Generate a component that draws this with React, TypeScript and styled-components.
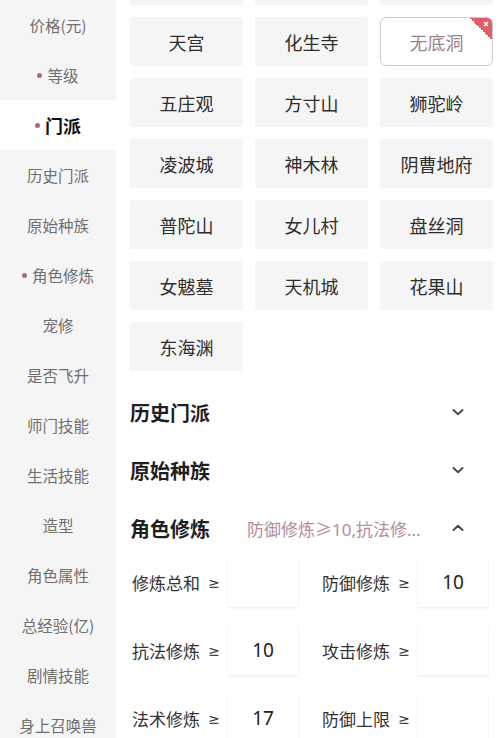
import React, { useLayoutEffect, useRef } from "react";
import styled, { createGlobalStyle } from "styled-components";

const Global = createGlobalStyle`
  html, body { margin: 0; padding: 0; background: #fff; }
  body {
    font-family: "Noto Sans CJK SC", "Noto Sans", sans-serif;
    overflow: hidden;
  }
  * { box-sizing: border-box; }
`;

const Page = styled.div`
  display: flex;
  width: 500px;
  height: 738px;
  overflow: hidden;
`;

const Sidebar = styled.nav`
  width: 116px;
  flex-shrink: 0;
  background: #f5f5f5;
  display: flex;
  flex-direction: column;
`;

const NavItem = styled.div<{ $active?: boolean }>`
  height: 50px;
  flex-shrink: 0;
  display: flex;
  align-items: center;
  justify-content: center;
  gap: 5px;
  font-size: ${(p) => (p.$active ? "18px" : "15.5px")};
  font-weight: ${(p) => (p.$active ? 700 : 400)};
  color: ${(p) => (p.$active ? "#111" : "#6f6f6f")};
  background: ${(p) => (p.$active ? "#fff" : "transparent")};
`;

const Dot = styled.span`
  width: 5px;
  height: 5px;
  border-radius: 50%;
  background: #b0687c;
`;

const Content = styled.main`
  flex: 1;
  height: 738px;
  overflow: hidden;
  padding: 0 6px 0 14px;
`;

const SchoolGrid = styled.div`
  display: grid;
  grid-template-columns: repeat(3, 113px);
  grid-auto-rows: 49px;
  column-gap: 12px;
  row-gap: 12px;
  margin-bottom: 12px;
`;

const Tile = styled.div<{ $selected?: boolean }>`
  position: relative;
  overflow: hidden;
  display: flex;
  align-items: center;
  justify-content: center;
  font-size: 18px;
  color: ${(p) => (p.$selected ? "#9c8390" : "#2e2e2e")};
  background: ${(p) => (p.$selected ? "#fff" : "#f5f5f5")};
  border: 1px solid ${(p) => (p.$selected ? "#d0cdce" : "transparent")};
  border-radius: ${(p) => (p.$selected ? "6px" : "3px")};
`;

const CornerMark = styled.span`
  position: absolute;
  top: 0;
  right: 0;
  width: 22px;
  height: 22px;
  background: linear-gradient(45deg, transparent 50%, #de5f6a 50%);
  svg {
    position: absolute;
    top: 3px;
    right: 3px;
  }
`;

const SectionHeader = styled.div`
  height: 58px;
  display: flex;
  align-items: center;
  padding-right: 29px;
`;

const SectionTitle = styled.h3`
  margin: 0;
  font-size: 20px;
  font-weight: 700;
  color: #1f1f1f;
  flex-shrink: 0;
`;

const Summary = styled.span`
  flex: 1;
  margin-left: 37px;
  font-family: "Noto Sans", "Noto Sans CJK SC", sans-serif;
  font-size: 17px;
  color: #b38d9d;
  white-space: nowrap;
`;

const Chevron = styled.svg`
  margin-left: auto;
  flex-shrink: 0;
`;

const FormGrid = styled.div`
  display: grid;
  grid-template-columns: 190px 180px;
  grid-auto-rows: 50px;
  row-gap: 18px;
  padding-left: 2px;
`;

const Field = styled.div`
  display: flex;
  align-items: center;
`;

const FieldLabel = styled.span`
  font-size: 17px;
  color: #333;
  width: 68px;
`;

const Gte = styled.span`
  font-family: "Noto Sans", "DejaVu Sans", sans-serif;
  font-size: 14px;
  color: #444;
  width: 28px;
  text-align: center;
`;

const ValueBox = styled.div`
  width: 70px;
  height: 50px;
  display: flex;
  align-items: center;
  justify-content: center;
  background: #fff;
  font-family: "Noto Sans", "Noto Sans CJK SC", sans-serif;
  font-size: 19px;
  color: #222;
  box-shadow: 0 1px 2px rgba(0, 0, 0, 0.07), 0 0 3px rgba(0, 0, 0, 0.04);
`;

const navItems: { label: string; dot?: boolean; active?: boolean }[] = [
  { label: "价格(元)" },
  { label: "等级", dot: true },
  { label: "门派", dot: true, active: true },
  { label: "历史门派" },
  { label: "原始种族" },
  { label: "角色修炼", dot: true },
  { label: "宠修" },
  { label: "是否飞升" },
  { label: "师门技能" },
  { label: "生活技能" },
  { label: "造型" },
  { label: "角色属性" },
  { label: "总经验(亿)" },
  { label: "剧情技能" },
  { label: "身上召唤兽" },
];

const schools = [
  "大唐官府", "龙宫", "魔王寨",
  "天宫", "化生寺", "无底洞",
  "五庄观", "方寸山", "狮驼岭",
  "凌波城", "神木林", "阴曹地府",
  "普陀山", "女儿村", "盘丝洞",
  "女魃墓", "天机城", "花果山",
  "东海渊",
];

const selectedSchool = "无底洞";

const cultivation: { label: string; value?: string }[] = [
  { label: "修炼总和" },
  { label: "防御修炼", value: "10" },
  { label: "抗法修炼", value: "10" },
  { label: "攻击修炼" },
  { label: "法术修炼", value: "17" },
  { label: "防御上限" },
];

function ChevronIcon({ up }: { up?: boolean }) {
  return (
    <Chevron width="14" height="10" viewBox="0 0 14 10">
      <path
        d={up ? "M2.5 7 L7 2.8 L11.5 7" : "M2.5 3 L7 7.2 L11.5 3"}
        fill="none"
        stroke="#4a4a4a"
        strokeWidth="2"
        strokeLinecap="round"
        strokeLinejoin="round"
      />
    </Chevron>
  );
}

export default function App() {
  const scroller = useRef<HTMLElement>(null);

  useLayoutEffect(() => {
    if (scroller.current) scroller.current.scrollTop = 44;
  }, []);

  return (
    <>
      <Global />
      <Page>
        <Sidebar>
          {navItems.map((item) => (
            <NavItem key={item.label} $active={item.active}>
              {item.dot && <Dot />}
              {item.label}
            </NavItem>
          ))}
        </Sidebar>
        <Content ref={scroller}>
          <SchoolGrid>
            {schools.map((name) => {
              const selected = name === selectedSchool;
              return (
                <Tile key={name} $selected={selected}>
                  {name}
                  {selected && (
                    <CornerMark>
                      <svg width="6" height="6" viewBox="0 0 6 6">
                        <path d="M1 1 L5 5 M5 1 L1 5" stroke="#fff" strokeWidth="1.3" />
                      </svg>
                    </CornerMark>
                  )}
                </Tile>
              );
            })}
          </SchoolGrid>

          <SectionHeader>
            <SectionTitle>历史门派</SectionTitle>
            <ChevronIcon />
          </SectionHeader>
          <SectionHeader>
            <SectionTitle>原始种族</SectionTitle>
            <ChevronIcon />
          </SectionHeader>
          <SectionHeader>
            <SectionTitle>角色修炼</SectionTitle>
            <Summary>防御修炼≥10,抗法修...</Summary>
            <ChevronIcon up />
          </SectionHeader>

          <FormGrid>
            {cultivation.map((f) => (
              <Field key={f.label}>
                <FieldLabel>{f.label}</FieldLabel>
                <Gte>≥</Gte>
                <ValueBox>{f.value ?? ""}</ValueBox>
              </Field>
            ))}
          </FormGrid>
        </Content>
      </Page>
    </>
  );
}
